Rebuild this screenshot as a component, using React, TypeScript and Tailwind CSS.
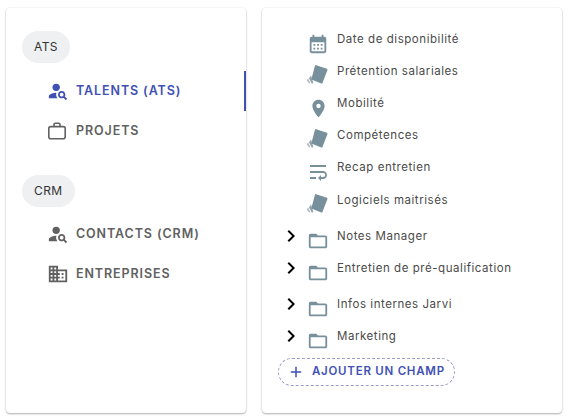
import React from 'react'
import {
  MdAdd,
  MdCalendarMonth,
  MdChevronRight,
  MdDomain,
  MdFolderOpen,
  MdPersonSearch,
  MdPlace,
  MdWrapText,
} from 'react-icons/md'

type NavItem = {
  label: string
  icon: React.ReactNode
  active?: boolean
}

function BriefcaseIcon() {
  return (
    <svg viewBox="-1 -2 22 22" width={22} height={22} fill="none" stroke="currentColor" strokeWidth={1.6} aria-hidden="true">
      <rect x="0.8" y="4.6" width="16.4" height="12.2" rx="2" />
      <path d="M6 4.6V2.4a1.2 1.2 0 0 1 1.2-1.2h3.6A1.2 1.2 0 0 1 12 2.4v2.2" />
    </svg>
  )
}

// tilted card with two slivers behind it
function TagsIcon() {
  return (
    <svg viewBox="0 0 24 24" width={24} height={24} fill="currentColor" aria-hidden="true">
      <path d="M9.8 2 20.6 5.6 15.6 18.6 6.4 15Z" stroke="currentColor" strokeWidth={1.8} strokeLinejoin="round" />
      <path d="M5 11.6 7.4 19 5.8 19.8 3 14.2Z" opacity={0.8} />
      <path d="M2.2 14.6 4.4 19.6 2.8 19.2 0.8 16.2Z" opacity={0.6} />
    </svg>
  )
}

const ATS_ITEMS: NavItem[] = [
  { label: 'TALENTS (ATS)', icon: <MdPersonSearch size={22} />, active: true },
  { label: 'PROJETS', icon: <BriefcaseIcon /> },
]

const CRM_ITEMS: NavItem[] = [
  { label: 'CONTACTS (CRM)', icon: <MdPersonSearch size={22} /> },
  { label: 'ENTREPRISES', icon: <MdDomain size={22} /> },
]

const FIELDS = [
  { label: 'Date de disponibilité', icon: <MdCalendarMonth size={22} /> },
  { label: 'Prétention salariales', icon: <TagsIcon /> },
  { label: 'Mobilité', icon: <MdPlace size={21} /> },
  { label: 'Compétences', icon: <TagsIcon /> },
  { label: 'Recap entretien', icon: <MdWrapText size={24} /> },
  { label: 'Logiciels maitrisés', icon: <TagsIcon /> },
]

const FOLDERS = [
  { label: 'Notes Manager', rowClass: 'h-8' },
  { label: 'Entretien de pré-qualification', rowClass: 'h-9' },
  { label: 'Infos internes Jarvi', rowClass: 'h-8' },
  { label: 'Marketing', rowClass: 'h-8' },
]

function Chip({ children }: { children: React.ReactNode }) {
  return (
    <span className="inline-flex h-8 items-center rounded-full bg-[#eef0f2] px-3 text-xs tracking-[0.4px] text-[#333]">
      {children}
    </span>
  )
}

function NavRow({ item }: { item: NavItem }) {
  return (
    <div className="relative flex h-10 items-center pl-[24px]">
      <span className={item.active ? 'text-[#3f51b5]' : 'text-[#616161]'}>{item.icon}</span>
      <span
        className={`ml-[7px] text-[12.5px] font-semibold tracking-[0.9px] ${item.active ? 'text-[#3f51b5]' : 'text-[#616161]'}`}
      >
        {item.label}
      </span>
      {item.active && <span className="absolute right-0 top-0 h-10 w-0.5 bg-[#3f51b5]" />}
    </div>
  )
}

function FieldRow({ label, icon }: { label: string; icon: React.ReactNode }) {
  return (
    <div className="flex h-8 items-start last:mt-px">
      <span className="flex h-6 w-6 translate-y-[3px] items-center justify-center text-[#78909c]">{icon}</span>
      <span className="ml-[7px] text-[11.5px] leading-5 tracking-[0.55px] text-[#4a4a4a]">{label}</span>
    </div>
  )
}

export default function App() {
  return (
    <div className="flex h-[419px] w-[574px] gap-4 bg-white pb-1.5 pl-1.5 pr-3 pt-2 font-['Inter',sans-serif]">
      <div className="w-60 rounded shadow-[0_1px_2px_rgba(0,0,0,0.3),0_0_2px_rgba(0,0,0,0.08)]">
        <div className="pl-4 pt-[23px]">
          <Chip>ATS</Chip>
        </div>
        <div className="mt-2 pl-[17px]">
          {ATS_ITEMS.map(item => (
            <NavRow key={item.label} item={item} />
          ))}
        </div>
        <div className="mt-[24px] pl-4">
          <Chip>CRM</Chip>
        </div>
        <div className="mt-[7px] pl-[17px]">
          {CRM_ITEMS.map(item => (
            <NavRow key={item.label} item={item} />
          ))}
        </div>
      </div>

      <div className="w-[300px] rounded pl-4 pt-[21px] shadow-[0_1px_2px_rgba(0,0,0,0.3),0_0_2px_rgba(0,0,0,0.08)]">
        <div className="pl-[28px]">
          {FIELDS.map(f => (
            <FieldRow key={f.label} label={f.label} icon={f.icon} />
          ))}
        </div>
        <div className="mt-1">
          {FOLDERS.map(f => (
            <div key={f.label} className={`flex items-start ${f.rowClass}`}>
              <MdChevronRight size={24} className="ml-[1px] mt-[-2px] text-black" />
              <span className="ml-[3px] flex h-6 w-6 translate-y-[3px] items-center justify-center text-[#78909c]">
                <MdFolderOpen size={22} />
              </span>
              <span className="ml-[7px] text-[11.5px] leading-5 tracking-[0.55px] text-[#4a4a4a]">{f.label}</span>
            </div>
          ))}
        </div>
        <div className="inline-flex h-7 items-center rounded-full border border-dashed border-[#9b9bc8] pl-2 pr-[9px] text-[#3f51b5]">
          <MdAdd size={18} />
          <span className="ml-[7px] text-[11.5px] font-semibold tracking-[0.75px]">AJOUTER UN CHAMP</span>
        </div>
      </div>
    </div>
  )
}
